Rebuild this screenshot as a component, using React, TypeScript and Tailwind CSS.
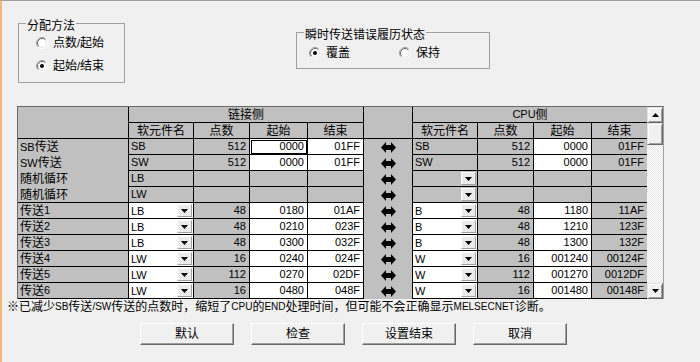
import React from "react";

const FONT = "font-['Liberation_Sans','Noto_Sans_CJK_SC',sans-serif]";

function Mixed({ s, latin = "text-[11px]" }: { s: string; latin?: string }) {
  const parts = s.match(/[\x00-\x7F]+|[^\x00-\x7F]+/g) || [];
  return (
    <>
      {parts.map((p, i) =>
        /^[\x00-\x7F]+$/.test(p) ? (
          <span key={i} className={latin}>
            {p}
          </span>
        ) : (
          <span key={i}>{p}</span>
        )
      )}
    </>
  );
}

function Radio({ checked }: { checked?: boolean }) {
  return (
    <svg width="12" height="12" viewBox="0 0 12 12" className="shrink-0">
      <circle cx="6" cy="6" r="5" fill="#ffffff" />
      <path d="M2.11 9.89A5.5 5.5 0 0 1 9.89 2.11" fill="none" stroke="#a0a0a0" />
      <path d="M9.89 2.11A5.5 5.5 0 0 1 2.11 9.89" fill="none" stroke="#ffffff" />
      <path d="M2.82 9.18A4.5 4.5 0 0 1 9.18 2.82" fill="none" stroke="#696969" />
      <path d="M9.18 2.82A4.5 4.5 0 0 1 2.82 9.18" fill="none" stroke="#e3e3e3" />
      {checked && <circle cx="6" cy="6" r="2" fill="#000000" />}
    </svg>
  );
}

function GroupBox({
  title,
  className,
  children,
}: {
  title: string;
  className: string;
  children: React.ReactNode;
}) {
  return (
    <div className={`relative border border-[#a0a0a0] ${className}`}>
      <span className="absolute top-[-4px] left-[7px] px-[1px] h-[12px] leading-[12px] bg-[#f0f0f0] whitespace-nowrap">
        {title}
      </span>
      {children}
    </div>
  );
}

function DropBtn() {
  return (
    <div className="w-[15px] h-[13px] mr-[1px] shrink-0 flex items-center justify-center bg-[#ebebeb] border border-t-white border-l-white border-r-[#a0a0a0] border-b-[#a0a0a0]">
      <svg width="7" height="4" viewBox="0 0 7 4">
        <path d="M0 0H7L3.5 4Z" fill="#000000" />
      </svg>
    </div>
  );
}

function Arrow() {
  return (
    <svg width="15" height="11" viewBox="0 0 15 11">
      <path d="M0 5.5L5 0V3H10V0L15 5.5L10 11V8H5V11Z" fill="#000000" />
    </svg>
  );
}

type CellProps = {
  text?: string;
  white?: boolean;
  align?: "l" | "r" | "c";
  b?: boolean;
  r?: boolean;
  dd?: boolean;
  focus?: boolean;
  span?: string;
};

function Cell({ text = "", white, align = "l", b = true, r = true, dd, focus, span = "" }: CellProps) {
  const cls = [
    "flex items-center overflow-hidden whitespace-nowrap border-black",
    b ? "border-b" : "",
    r ? "border-r" : "",
    white ? "bg-white" : "",
    align === "l" ? "justify-start pl-[2px]" : align === "r" ? "justify-end pr-[3px]" : "justify-center",
    focus ? "outline outline-black -outline-offset-2" : "",
    span,
  ].join(" ");
  if (dd) {
    return (
      <div className={cls}>
        <span className="flex-1">
          <Mixed s={text} />
        </span>
        <DropBtn />
      </div>
    );
  }
  return (
    <div className={cls}>
      <Mixed s={text} />
    </div>
  );
}

type Row = {
  label: string;
  lb: boolean;
  ldev: string;
  ldevW: boolean;
  ldd: boolean;
  lpts: string;
  lstart: string;
  lstartW: boolean;
  lend: string;
  lendW: boolean;
  cdev: string;
  cdevW: boolean;
  cdd: boolean;
  cpts: string;
  cstart: string;
  cstartW: boolean;
  cend: string;
  focus?: boolean;
};

const transfer = (n: number, ldev: string, pts: string, ls: string, le: string, cdev: string, cs: string, ce: string): Row => ({
  label: `传送${n}`,
  lb: true,
  ldev,
  ldevW: true,
  ldd: true,
  lpts: pts,
  lstart: ls,
  lstartW: true,
  lend: le,
  lendW: true,
  cdev,
  cdevW: true,
  cdd: true,
  cpts: pts,
  cstart: cs,
  cstartW: true,
  cend: ce,
});

const rows: Row[] = [
  { label: "SB传送", lb: false, ldev: "SB", ldevW: false, ldd: false, lpts: "512", lstart: "0000", lstartW: true, lend: "01FF", lendW: true, cdev: "SB", cdevW: false, cdd: false, cpts: "512", cstart: "0000", cstartW: true, cend: "01FF", focus: true },
  { label: "SW传送", lb: false, ldev: "SW", ldevW: false, ldd: false, lpts: "512", lstart: "0000", lstartW: true, lend: "01FF", lendW: true, cdev: "SW", cdevW: false, cdd: false, cpts: "512", cstart: "0000", cstartW: true, cend: "01FF" },
  { label: "随机循环", lb: false, ldev: "LB", ldevW: false, ldd: false, lpts: "", lstart: "", lstartW: false, lend: "", lendW: false, cdev: "", cdevW: false, cdd: true, cpts: "", cstart: "", cstartW: false, cend: "" },
  { label: "随机循环", lb: true, ldev: "LW", ldevW: false, ldd: false, lpts: "", lstart: "", lstartW: false, lend: "", lendW: false, cdev: "", cdevW: false, cdd: true, cpts: "", cstart: "", cstartW: false, cend: "" },
  transfer(1, "LB", "48", "0180", "01AF", "B", "1180", "11AF"),
  transfer(2, "LB", "48", "0210", "023F", "B", "1210", "123F"),
  transfer(3, "LB", "48", "0300", "032F", "B", "1300", "132F"),
  transfer(4, "LW", "16", "0240", "024F", "W", "001240", "00124F"),
  transfer(5, "LW", "112", "0270", "02DF", "W", "001270", "0012DF"),
  transfer(6, "LW", "16", "0480", "048F", "W", "001480", "00148F"),
];

const raised =
  "bg-[#f0f0f0] border border-t-[#e3e3e3] border-l-[#e3e3e3] border-r-[#696969] border-b-[#696969] shadow-[inset_1px_1px_0_#ffffff,inset_-1px_-1px_0_#a0a0a0]";

function Scrollbar() {
  return (
    <div className="w-[16px] flex flex-col">
      <div className={`h-[16px] flex items-center justify-center ${raised}`}>
        <svg width="7" height="4" viewBox="0 0 7 4">
          <path d="M3.5 0L7 4H0Z" fill="#000000" />
        </svg>
      </div>
      <div className={`h-[22px] ${raised}`} />
      <div className="flex-1 bg-[repeating-conic-gradient(#ffffff_0%_25%,#e6e6e6_0%_50%)] bg-[length:2px_2px]" />
      <div className={`h-[16px] flex items-center justify-center ${raised}`}>
        <svg width="7" height="4" viewBox="0 0 7 4">
          <path d="M0 0H7L3.5 4Z" fill="#000000" />
        </svg>
      </div>
    </div>
  );
}

export default function App() {
  return (
    <div
      className={`w-[700px] h-[362px] overflow-hidden bg-[#f0f0f0] border-l-2 border-l-[#f5b478] border-t border-t-[#a0a0a0] text-[12px] leading-none text-black ${FONT}`}
    >
      {/* Top group boxes */}
      <div className="flex items-start">
        <GroupBox title="分配方法" className="ml-[16px] mt-[22px] w-[107px] h-[60px]">
          <div className="flex flex-col pl-[17px] pt-[13px] gap-[11px]">
            <div className="flex items-center h-[12px]">
              <Radio />
              <span className="ml-[5px]">
                <Mixed s="点数/起始" />
              </span>
            </div>
            <div className="flex items-center h-[12px]">
              <Radio checked />
              <span className="ml-[5px]">
                <Mixed s="起始/结束" />
              </span>
            </div>
          </div>
        </GroupBox>
        <GroupBox title="瞬时传送错误履历状态" className="ml-[171px] mt-[31px] w-[194px] h-[37px]">
          <div className="flex items-center pl-[12px] pt-[14px]">
            <div className="flex items-center h-[12px] w-[90px]">
              <Radio checked />
              <span className="ml-[5px]">覆盖</span>
            </div>
            <div className="flex items-center h-[12px]">
              <Radio />
              <span className="ml-[5px]">保持</span>
            </div>
          </div>
        </GroupBox>
      </div>

      {/* Table */}
      <div className="ml-[15px] mt-[23px] w-[647px] h-[193px] flex border-t border-l border-r border-t-[#696969] border-l-[#696969] border-r-[#a0a0a0] bg-[#c0c0c0]">
        <div className="grid w-[629px] grid-cols-[111px_65px_56px_58px_56px_49px_65px_56px_58px_55px] auto-rows-[16px]">
          {/* arrow column body */}
          <div className="col-start-6 row-start-3 row-span-10 border-r border-black flex flex-col">
            {rows.map((_, i) => (
              <div key={i} className="h-[16px] flex items-center justify-center">
                <Arrow />
              </div>
            ))}
          </div>
          {/* header */}
          <Cell span="row-span-2" />
          <Cell text="链接侧" align="c" span="col-span-4" />
          <Cell span="row-span-2" />
          <Cell text="CPU侧" align="c" r={false} span="col-span-4" />
          <Cell text="软元件名" align="c" />
          <Cell text="点数" align="c" />
          <Cell text="起始" align="c" />
          <Cell text="结束" align="c" />
          <Cell text="软元件名" align="c" />
          <Cell text="点数" align="c" />
          <Cell text="起始" align="c" />
          <Cell text="结束" align="c" r={false} />
          {/* body */}
          {rows.map((row, i) => (
            <React.Fragment key={i}>
              <Cell text={row.label} b={row.lb} />
              <Cell text={row.ldev} white={row.ldevW} dd={row.ldd} />
              <Cell text={row.lpts} align="r" />
              <Cell text={row.lstart} align="r" white={row.lstartW} focus={row.focus} />
              <Cell text={row.lend} align="r" white={row.lendW} />
              <Cell text={row.cdev} white={row.cdevW} dd={row.cdd} />
              <Cell text={row.cpts} align="r" />
              <Cell text={row.cstart} align="r" white={row.cstartW} />
              <Cell text={row.cend} align="r" r={false} />
            </React.Fragment>
          ))}
        </div>
        <Scrollbar />
      </div>

      {/* Note */}
      <div className="ml-[5px] mt-[1px] h-[14px] flex items-center whitespace-nowrap">
        <Mixed s="※已减少SB传送/SW传送的点数时，缩短了CPU的END处理时间，但可能不会正确显示MELSECNET诊断。" latin="text-[10px]" />
      </div>

      {/* Buttons */}
      <div className="flex ml-[138px] mt-[9px] gap-[17px]">
        {["默认", "检查", "设置结束", "取消"].map((t) => (
          <button
            key={t}
            type="button"
            className="w-[94px] h-[22px] flex items-center justify-center bg-[#f0f0f0] border border-t-white border-l-white border-r-[#696969] border-b-[#696969] shadow-[inset_-1px_-1px_0_#a0a0a0]"
          >
            {t}
          </button>
        ))}
      </div>
    </div>
  );
}
